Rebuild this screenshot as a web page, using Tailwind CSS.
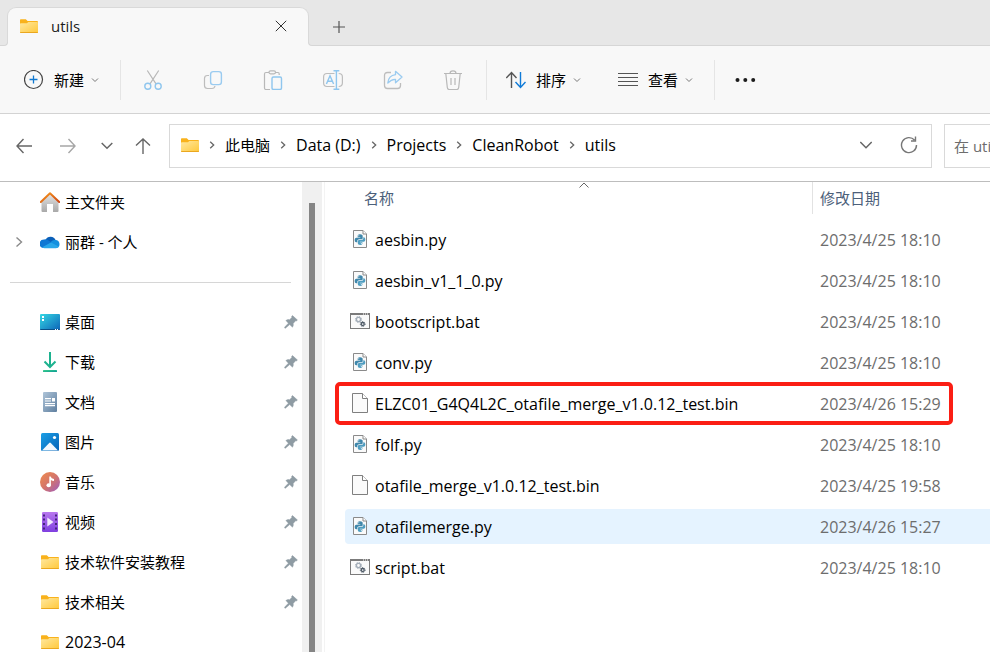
<!DOCTYPE html>
<html lang="zh-CN">
<head>
<meta charset="utf-8">
<meta name="viewport" content="width=device-width, initial-scale=1">
<title>utils</title>
<script src="https://cdn.jsdelivr.net/npm/@tailwindcss/browser@4"></script>
</head>
<body class="flex h-screen flex-col overflow-hidden bg-white font-['Open_Sans','Noto_Sans_CJK_SC',sans-serif] text-[15px] leading-5 text-black">

<!-- Shared icons -->
<svg class="absolute size-0" aria-hidden="true">
  <defs>
    <linearGradient id="g-folder" x1="0" y1="0" x2="1" y2="1"><stop offset="0" stop-color="#ffe8a0"/><stop offset="1" stop-color="#ffc83a"/></linearGradient>
    <linearGradient id="g-house" x1="0" y1="0" x2="0" y2="1"><stop offset="0" stop-color="#e4e4e4"/><stop offset="1" stop-color="#a9a9a9"/></linearGradient>
    <linearGradient id="g-roof" x1="0" y1="0" x2="1" y2="1"><stop offset="0" stop-color="#f79a1e"/><stop offset="1" stop-color="#cf4310"/></linearGradient>
    <linearGradient id="g-desk" x1="0" y1="0" x2="1" y2="1"><stop offset="0" stop-color="#35d8e4"/><stop offset="1" stop-color="#0d64b8"/></linearGradient>
    <linearGradient id="g-down" x1="0" y1="0" x2="1" y2="1"><stop offset="0" stop-color="#3fd08c"/><stop offset="1" stop-color="#089a96"/></linearGradient>
    <linearGradient id="g-doc" x1="0" y1="0" x2="1" y2="1"><stop offset="0" stop-color="#aec4d8"/><stop offset="1" stop-color="#5f7f9f"/></linearGradient>
    <linearGradient id="g-pic" x1="0" y1="0" x2="1" y2="1"><stop offset="0" stop-color="#1b9fe6"/><stop offset="1" stop-color="#0562b6"/></linearGradient>
    <linearGradient id="g-music" x1="0" y1="0" x2="1" y2="1"><stop offset="0" stop-color="#f08c4c"/><stop offset=".5" stop-color="#d4756b"/><stop offset="1" stop-color="#9c5bc0"/></linearGradient>
    <linearGradient id="g-video" x1="0" y1="0" x2="0" y2="1"><stop offset="0" stop-color="#b877ee"/><stop offset="1" stop-color="#7f3fe0"/></linearGradient>
  </defs>
  <symbol id="folder" viewBox="0 0 20 20">
    <path d="M1 4a.8.8 0 0 1 .8-.8h5L8.600 5H18a1 1 0 0 1 1 1v3H1z" fill="#f9b21c"/>
    <path d="M1 8q0-.8.8-.8H8L9.300 6H18.200q.8 0 .8.800V16q0 1-.8 1H1.800Q1 17 1 16z" fill="url(#g-folder)"/>
    <path d="M1 16q0 1 .8 1h16.400q.8 0 .8-1z" fill="#eaa71f"/>
  </symbol>
  <symbol id="home" viewBox="0 0 20 20">
    <path d="M1.500 9.500 10 1.800l8.500 7.700V19q0 1-1 1H13v-8H7v8H2.500q-1 0-1-1z" fill="url(#g-house)"/>
    <path d="M.8 10 10 1.300 19.200 10" fill="none" stroke="url(#g-roof)" stroke-width="2" stroke-linecap="round" stroke-linejoin="round"/>
  </symbol>
  <symbol id="cloud" viewBox="0 0 20 20">
    <path d="M5.500 8a5.600 5.600 0 0 1 10.200.3L10 12z" fill="#0a5fb8"/>
    <path d="M4 7.500a5 5 0 0 1 4.500 1L15 12.500 3 16a4.300 4.300 0 0 1 1-8.500z" fill="#0f78d4"/>
    <path d="M10.500 10.500a4.500 4.500 0 0 1 5.200-2.400 4 4 0 0 1 1.300 7.700z" fill="#1490df"/>
    <path d="M2.200 15.200 10 11q1-.7 2 0l7 3.800a4 4 0 0 1-3 1.400H4.500a4 4 0 0 1-2.300-1z" fill="#29a7ea"/>
  </symbol>
  <symbol id="desktop" viewBox="0 0 20 20">
    <rect y="2" width="20" height="16" rx="1" fill="url(#g-desk)"/>
    <path d="M0 17h20q0 1-1 1H1q-1 0-1-1z" fill="#0a4f87"/>
    <path d="M2 4h2v2H2zM2 7h2v2H2zM15 17h1v1h-1zM17 17h1v1h-1z" fill="#fff"/>
  </symbol>
  <symbol id="download" viewBox="0 0 20 20">
    <path d="M10 0v14.500M4.500 9.500 10 15l5.500-5.500" fill="none" stroke="#1db28f" stroke-width="2"/>
    <rect x="3" y="18" width="14" height="2" rx=".5" fill="url(#g-down)"/>
  </symbol>
  <symbol id="document" viewBox="0 0 20 20">
    <rect x="3" width="14" height="20" rx="1" fill="url(#g-doc)"/>
    <path d="M5 6h6v1.200H5zM5 8.400h6v1.200H5zM12 6h3v3.500h-3zM5 11h10v1.200H5zM5 13h10v1.200H5z" fill="#fff"/>
  </symbol>
  <symbol id="picture" viewBox="0 0 20 20">
    <rect x="1" y="1" width="18" height="18" rx="1.500" fill="url(#g-pic)"/>
    <path d="M2 18.500 9.200 11q.8-.8 1.600 0l7.200 7.500z" fill="#f2f8fd"/>
    <circle cx="14.500" cy="5.500" r="1.600" fill="#fff"/>
  </symbol>
  <symbol id="music" viewBox="0 0 20 20">
    <circle cx="10" cy="10" r="10" fill="url(#g-music)"/>
    <ellipse cx="8.700" cy="13.300" rx="2.200" ry="2" fill="#fff"/>
    <path d="M10.900 13.300h-1.600V4.500h1.400q.4 2 3.300 2.600v2q-2-.3-3.100-1.200z" fill="#fff"/>
  </symbol>
  <symbol id="video" viewBox="0 0 20 20">
    <rect x="2" width="16" height="20" rx="1.200" fill="url(#g-video)"/>
    <path d="M3 2.500h2v2H3zM3 6.500h2v2H3zM3 11h2v2H3zM3 15.500h2v2H3zM15 2.500h2v2h-2zM15 6.500h2v2h-2zM15 11h2v2h-2zM15 15.500h2v2h-2z" fill="#46257e"/>
    <path d="M7.300 5.500v9l6.200-4.500z" fill="#f2eafd"/>
  </symbol>
  <symbol id="pin" viewBox="0 0 14 14">
    <path d="M8.500.6 13.400 5l-1 .9-.8-.1-2.400 2.600q.5 2-.7 3.800L5.700 9.600 1.400 13.200.6 12.900l.2-.9L4.400 8.200 1.900 5.500Q3.700 4.100 5.600 4.700L8 2.300 7.600 1.400z" fill="#8e9ba3" stroke="#8e9ba3" stroke-width=".5"/>
  </symbol>
  <symbol id="py" viewBox="0 0 20 20">
    <path d="M3.500 1.500h9.500l3.500 3.500v13.500h-13z" fill="#fafafa" stroke="#8a8a8a"/>
    <path d="M13 1.500V5h3.500" fill="#fff" stroke="#8a8a8a"/>
    <path d="M10 5.300c-2.300 0-2.300 1-2.300 2v.9h2.600v.5H6.400c-1.300 0-1.700 1.100-1.700 2.200 0 1.300.5 2.300 1.600 2.300h1v-1.100c0-1 .8-1.800 1.800-1.800h2.300c.8 0 1.300-.6 1.300-1.400V7.200c0-1.200-.9-1.900-2.700-1.900z" fill="#3f87ab"/>
    <path d="M10.200 16c2.200 0 2.200-1 2.200-1.900v-.9H9.900v-.5h3.800c1.200 0 1.600-1.100 1.600-2.100 0-1.300-.5-2.300-1.500-2.300h-.5v1c0 1-.8 1.700-1.800 1.700H9.200c-.8 0-1.400.6-1.400 1.400v1.700c0 1.200.8 1.900 2.400 1.900z" fill="#4f9dc0"/>
    <circle cx="8.800" cy="6.700" r=".5" fill="#fff"/><circle cx="11.300" cy="14.500" r=".5" fill="#fff"/>
  </symbol>
  <symbol id="bat" viewBox="0 0 20 20">
    <rect x=".5" y="2.500" width="19" height="15" fill="#fafafa" stroke="#7b7b7b"/>
    <path d="M0 2h20v2H0z" fill="#7b7b7b"/>
    <path d="M13 2.500h1v1h-1zM15 2.500h1v1h-1zM17 2.500h1v1h-1z" fill="#fff"/>
    <circle cx="8.500" cy="8.500" r="2.100" fill="none" stroke="#a3adb8" stroke-width="1.400"/>
    <circle cx="8.500" cy="8.500" r="3.100" fill="none" stroke="#a3adb8" stroke-dasharray="1.200 1.230"/>
    <circle cx="12.700" cy="13" r="1.500" fill="none" stroke="#4d5966" stroke-width="1.300"/>
    <circle cx="12.700" cy="13" r="2.400" fill="none" stroke="#4d5966" stroke-dasharray="1 .88"/>
  </symbol>
  <symbol id="bin" viewBox="0 0 20 20">
    <path d="M2.500.5h10l5 5v14h-15z" fill="#fafafa" stroke="#7f7f7f"/>
    <path d="M12.500.5v5h5" fill="#fff" stroke="#7f7f7f"/>
  </symbol>
  <symbol id="chev-down" viewBox="0 0 8 8"><path d="m1 2.500 3 3 3-3" fill="none" stroke="#777"/></symbol>
  <symbol id="chev-right" viewBox="0 0 8 8"><path d="M2.200.7 5.700 4 2.200 7.300" fill="none" stroke="#666" stroke-width="1.300"/></symbol>
</svg>

<header class="flex h-[46px] shrink-0 items-end border-b border-[#d6d6d6] bg-[#e7e7e7] pl-[7px]">
  <div class="relative -mb-px flex h-[39px] w-[302px] items-center rounded-t-[9px] border border-b-0 border-[#d9d9d9] bg-[#f8f8f8] pr-[21px] pb-0.5 pl-[11px]">
    <span class="absolute bottom-0 -left-1 size-1 bg-[#f8f8f8]"><span class="block size-1 rounded-br-[4px] border-r border-b border-[#d6d6d6] bg-[#e7e7e7]"></span></span>
    <span class="absolute -right-1 bottom-0 size-1 bg-[#f8f8f8]"><span class="block size-1 rounded-bl-[4px] border-b border-l border-[#d6d6d6] bg-[#e7e7e7]"></span></span>
    <svg class="size-5" aria-hidden="true"><use href="#folder"/></svg>
    <span class="ml-3 flex-1 font-medium text-[#1b1b1b]">utils</span>
    <button type="button" aria-label="关闭标签页"><svg class="size-3" viewBox="0 0 12 12" fill="none" stroke="#333"><path d="m.8.800 10.400 10.400M11.200.800.800 11.200"/></svg></button>
  </div>
  <button type="button" class="mb-3 ml-6" aria-label="新建标签页"><svg class="size-3" viewBox="0 0 12 12" fill="none" stroke="#555" stroke-width="1.200"><path d="M6 0v12M0 6h12"/></svg></button>
</header>

<div class="flex h-[68px] shrink-0 items-center border-b border-[#d3d3d3] bg-[#f8f8f8] pl-6" role="toolbar" aria-label="命令栏">
  <button type="button" class="flex items-center">
    <svg class="size-5" viewBox="0 0 20 20" fill="none" aria-hidden="true"><circle cx="9.500" cy="9.500" r="9" stroke="#444" stroke-width="1.200"/><path d="M9.500 5.500v8M5.500 9.500h8" stroke="#0f78d0" stroke-width="1.300"/></svg>
    <span class="ml-[10px]">新建</span>
    <svg class="ml-[7px] size-2" aria-hidden="true"><use href="#chev-down"/></svg>
  </button>
  <span class="ml-[21px] h-10 w-px bg-[#e5e5e5]"></span>
  <div class="ml-[22px] flex gap-10">
    <button type="button" aria-label="剪切"><svg class="size-5" viewBox="0 0 20 20" fill="none" stroke-width="1.200"><path d="M4.300.500 13 13.800M15.700.500 7 13.800" stroke="#b8b8b8"/><g stroke="#8fc6ee" stroke-width="1.400"><circle cx="4.800" cy="16.300" r="3"/><circle cx="15.200" cy="16.300" r="3"/></g></svg></button>
    <button type="button" aria-label="复制"><svg class="size-5" viewBox="0 0 20 20" fill="none"><path d="M6 5.500H4.500q-3 0-3 3v7q0 3 3 3H9q2.500 0 3-2.500" stroke="#bdbdbd" stroke-width="1.200"/><rect x="7.600" y="1.600" width="10.800" height="13" rx="2.600" stroke="#9acbf0" stroke-width="1.400"/></svg></button>
    <button type="button" aria-label="粘贴"><svg class="size-5" viewBox="0 0 20 20" fill="none"><path d="M6 2.500H3q-1.500 0-1.500 1.500v14q0 1.500 1.500 1.500h4M12 2.500h3q1.200 0 1.200 1.500v1" stroke="#b8b8b8" stroke-width="1.200"/><rect x="6" y=".8" width="6.500" height="3" rx="1.500" stroke="#b8b8b8" stroke-width="1.200"/><rect x="9" y="7" width="9.500" height="12.400" rx="1.500" stroke="#8fc6ee" stroke-width="1.400"/></svg></button>
    <button type="button" aria-label="重命名"><svg class="size-5" viewBox="0 0 20 20" fill="none"><path d="M11.500 3.500H4q-3.400 0-3.400 3.400v6.200q0 3.400 3.400 3.400h7.500M15.700 3.500q3.700 0 3.700 3.400v6.200q0 3.400-3.700 3.400" stroke="#bdbdbd" stroke-width="1.200"/><path d="M10.500.7h5.800M10.500 19.300h5.800M13.400.7v18.600M3.400 14 7 5.800 10.600 14M4.600 11.300h4.800" stroke="#8fc6ee" stroke-width="1.400"/></svg></button>
    <button type="button" aria-label="共享"><svg class="size-5" viewBox="0 0 20 20" fill="none"><path d="M8 2.500H4.500q-3 0-3 3v10q0 3 3 3h10q3 0 3-3V13" stroke="#bdbdbd" stroke-width="1.300"/><path d="M12.500 1.300 19 7l-6.500 5.700V9.300Q8.500 9 4.800 13 5.500 5.500 12.500 4.700z" stroke="#9acbf0" stroke-width="1.300" stroke-linejoin="round"/></svg></button>
    <button type="button" aria-label="删除"><svg class="size-5" viewBox="0 0 20 20" fill="none" stroke="#b8b8b8" stroke-width="1.200"><path d="M1 3.500h18M7 3.500q0-2.700 3-2.700t3 2.700M2.800 3.500l1.500 14q.2 2 2 2h7.400q1.800 0 2-2l1.500-14M8 8v7M12 8v7"/></svg></button>
  </div>
  <span class="ml-[23px] h-10 w-px bg-[#e5e5e5]"></span>
  <button type="button" class="ml-[19px] flex items-center">
    <svg class="size-5" viewBox="0 0 20 20" fill="none" stroke-width="1.400" aria-hidden="true"><path d="M5.500 18V2.500M.300 8 5.500 2.500l5 5.500" stroke="#555"/><path d="M14.500 2v15.500M9.500 12l5 5.500 5-5.500" stroke="#0f7bd8"/></svg>
    <span class="ml-[10px]">排序</span>
    <svg class="ml-[7px] size-2" aria-hidden="true"><use href="#chev-down"/></svg>
  </button>
  <button type="button" class="ml-[37px] flex items-center">
    <svg class="size-5" viewBox="0 0 20 20" fill="#555" aria-hidden="true"><path d="M0 3h20v1H0zM0 7h20v1H0zM0 11h20v1H0zM0 15h20v1H0z"/></svg>
    <span class="ml-[10px]">查看</span>
    <svg class="ml-[7px] size-2" aria-hidden="true"><use href="#chev-down"/></svg>
  </button>
  <span class="ml-[21px] h-10 w-px bg-[#e5e5e5]"></span>
  <button type="button" class="ml-5" aria-label="查看更多"><svg class="h-5 w-[21px]" viewBox="0 0 21 20" fill="#1c1c1c"><circle cx="2.500" cy="10" r="2"/><circle cx="10.300" cy="10" r="2"/><circle cx="18.200" cy="10" r="2"/></svg></button>
</div>

<div class="flex h-[68px] shrink-0 items-center border-b border-[#bdbdbd] pt-px pb-1">
  <div class="flex w-[169px] shrink-0 items-center pl-4">
    <button type="button" aria-label="后退"><svg class="size-4" viewBox="0 0 16 16" fill="none" stroke="#666" stroke-width="1.400"><path d="M16 8H1M7.500 1 1 8l6.500 7"/></svg></button>
    <button type="button" class="ml-7" aria-label="前进"><svg class="size-4" viewBox="0 0 16 16" fill="none" stroke="#a6a6a6" stroke-width="1.400"><path d="M0 8h15M8.500 1 15 8l-6.500 7"/></svg></button>
    <button type="button" class="ml-[25px]" aria-label="最近位置"><svg class="h-4 w-3" viewBox="0 0 12 16" fill="none" stroke="#666" stroke-width="1.500"><path d="m.700 5 5.300 5.300L11.300 5"/></svg></button>
    <button type="button" class="ml-[22px]" aria-label="向上"><svg class="size-4" viewBox="0 0 16 16" fill="none" stroke="#666" stroke-width="1.400"><path d="M8 16V1M1 7.500 8 1l7 6.500"/></svg></button>
  </div>
  <nav class="flex h-11 min-w-0 flex-1 items-center border border-[#d9d9d9] pr-[13px] pb-0.5 pl-[10px]" aria-label="地址">
    <svg class="size-5 shrink-0" aria-hidden="true"><use href="#folder"/></svg>
    <ol class="ml-2 flex flex-1 items-center text-base leading-5 whitespace-nowrap">
      <li class="flex items-center text-[15px]"><svg class="mr-[9px] size-2" aria-hidden="true"><use href="#chev-right"/></svg><a href="#">此电脑</a></li>
      <li class="flex items-center"><svg class="mx-[9px] size-2" aria-hidden="true"><use href="#chev-right"/></svg><a href="#">Data (D:)</a></li>
      <li class="flex items-center"><svg class="mx-[9px] size-2" aria-hidden="true"><use href="#chev-right"/></svg><a href="#">Projects</a></li>
      <li class="flex items-center"><svg class="mx-[9px] size-2" aria-hidden="true"><use href="#chev-right"/></svg><a href="#">CleanRobot</a></li>
      <li class="flex items-center"><svg class="mx-[9px] size-2" aria-hidden="true"><use href="#chev-right"/></svg><a href="#">utils</a></li>
    </ol>
    <button type="button" aria-label="以前的位置"><svg class="h-4 w-3" viewBox="0 0 12 16" fill="none" stroke="#666" stroke-width="1.500"><path d="m.300 5 5.700 5.700L11.700 5"/></svg></button>
    <button type="button" class="ml-7" aria-label="刷新"><svg class="size-[18px]" viewBox="0 0 18 18" fill="none" stroke="#777" stroke-width="1.400"><path d="M14.500 4A7.500 7.500 0 1 0 16.500 9M15.500.500V5H11"/></svg></button>
  </nav>
  <input type="text" aria-label="搜索" placeholder="在 utils 中搜索" class="ml-3 h-11 w-[46px] shrink-0 border border-r-0 border-[#d9d9d9] bg-white pl-[9px] placeholder:text-[#6d6d6d]">
</div>

<div class="flex min-h-0 flex-1">
  <aside class="w-[302px] shrink-0 overflow-hidden">
    <nav aria-label="导航窗格">
      <a href="#" class="flex h-10 items-center pl-10"><svg class="size-5" aria-hidden="true"><use href="#home"/></svg><span class="ml-[5px]">主文件夹</span></a>
      <a href="#" class="flex h-10 items-center pl-[14px]"><svg class="size-[10px]" viewBox="0 0 10 10" fill="none" stroke="#8a8a8a" stroke-width="1.400" aria-hidden="true"><path d="m2.500.500 5 4.500-5 4.500"/></svg><svg class="ml-4 size-5" aria-hidden="true"><use href="#cloud"/></svg><span class="ml-[5px]">丽群 - 个人</span></a>
      <div class="flex h-10 items-center pr-[11px] pl-[10px]"><hr class="flex-1 border-[#d6d6d6]"></div>
      <a href="#" class="flex h-10 items-center pr-1 pl-10"><svg class="size-5" aria-hidden="true"><use href="#desktop"/></svg><span class="ml-[5px] flex-1">桌面</span><svg class="size-[14px]" aria-hidden="true"><use href="#pin"/></svg></a>
      <a href="#" class="flex h-10 items-center pr-1 pl-10"><svg class="size-5" aria-hidden="true"><use href="#download"/></svg><span class="ml-[5px] flex-1">下载</span><svg class="size-[14px]" aria-hidden="true"><use href="#pin"/></svg></a>
      <a href="#" class="flex h-10 items-center pr-1 pl-10"><svg class="size-5" aria-hidden="true"><use href="#document"/></svg><span class="ml-[5px] flex-1">文档</span><svg class="size-[14px]" aria-hidden="true"><use href="#pin"/></svg></a>
      <a href="#" class="flex h-10 items-center pr-1 pl-10"><svg class="size-5" aria-hidden="true"><use href="#picture"/></svg><span class="ml-[5px] flex-1">图片</span><svg class="size-[14px]" aria-hidden="true"><use href="#pin"/></svg></a>
      <a href="#" class="flex h-10 items-center pr-1 pl-10"><svg class="size-5" aria-hidden="true"><use href="#music"/></svg><span class="ml-[5px] flex-1">音乐</span><svg class="size-[14px]" aria-hidden="true"><use href="#pin"/></svg></a>
      <a href="#" class="flex h-10 items-center pr-1 pl-10"><svg class="size-5" aria-hidden="true"><use href="#video"/></svg><span class="ml-[5px] flex-1">视频</span><svg class="size-[14px]" aria-hidden="true"><use href="#pin"/></svg></a>
      <a href="#" class="flex h-10 items-center pr-1 pl-10"><svg class="size-5" aria-hidden="true"><use href="#folder"/></svg><span class="ml-[5px] flex-1">技术软件安装教程</span><svg class="size-[14px]" aria-hidden="true"><use href="#pin"/></svg></a>
      <a href="#" class="flex h-10 items-center pr-1 pl-10"><svg class="size-5" aria-hidden="true"><use href="#folder"/></svg><span class="ml-[5px] flex-1">技术相关</span><svg class="size-[14px]" aria-hidden="true"><use href="#pin"/></svg></a>
      <a href="#" class="flex h-10 items-center pr-1 pl-10"><svg class="size-5" aria-hidden="true"><use href="#folder"/></svg><span class="ml-[5px] flex-1 text-base leading-5">2023-04</span></a>
    </nav>
  </aside>
  <div class="flex w-5 shrink-0 justify-center bg-[#f0f0f0] pt-[21px]"><div class="w-[6px] bg-[#858585]"></div></div>
  <main class="relative ml-[2px] min-w-0 flex-1 overflow-hidden border-l border-[#f3f3f3] pl-5">
    <table class="w-full table-fixed border-collapse text-left">
      <colgroup><col class="w-[467px]"><col></colgroup>
      <thead>
        <tr class="h-[37px] align-top text-[#4c607a]">
          <th scope="col" aria-sort="ascending" class="relative p-0 font-normal">
            <svg class="absolute top-0 left-[234px] h-2 w-[10px]" viewBox="0 0 10 8" fill="none" stroke="#666" aria-hidden="true"><path d="m.500 5.500 4.500-4.500L9.500 5.500"/></svg>
            <div class="flex h-8 items-center pl-[19px]">名称</div>
          </th>
          <th scope="col" class="p-0 font-normal"><div class="flex h-8 items-center border-l border-[#e2e2e2] pl-[7px]">修改日期</div></th>
        </tr>
      </thead>
      <tbody class="text-base leading-5 whitespace-nowrap">
        <tr><td class="px-0 py-[3px]"><div class="flex h-[35px] items-center pl-[5px]"><svg class="mr-[5px] mb-0.5 size-5" aria-hidden="true"><use href="#py"/></svg>aesbin.py</div></td><td class="px-0 py-[3px]"><div class="flex h-[35px] items-center pl-2 text-[#6d6d6d]">2023/4/25 18:10</div></td></tr>
        <tr><td class="px-0 py-[3px]"><div class="flex h-[35px] items-center pl-[5px]"><svg class="mr-[5px] mb-0.5 size-5" aria-hidden="true"><use href="#py"/></svg>aesbin_v1_1_0.py</div></td><td class="px-0 py-[3px]"><div class="flex h-[35px] items-center pl-2 text-[#6d6d6d]">2023/4/25 18:10</div></td></tr>
        <tr><td class="px-0 py-[3px]"><div class="flex h-[35px] items-center pl-[5px]"><svg class="mr-[5px] mb-0.5 size-5" aria-hidden="true"><use href="#bat"/></svg>bootscript.bat</div></td><td class="px-0 py-[3px]"><div class="flex h-[35px] items-center pl-2 text-[#6d6d6d]">2023/4/25 18:10</div></td></tr>
        <tr><td class="px-0 py-[3px]"><div class="flex h-[35px] items-center pl-[5px]"><svg class="mr-[5px] mb-0.5 size-5" aria-hidden="true"><use href="#py"/></svg>conv.py</div></td><td class="px-0 py-[3px]"><div class="flex h-[35px] items-center pl-2 text-[#6d6d6d]">2023/4/25 18:10</div></td></tr>
        <tr class="relative"><td class="px-0 py-[3px]"><span class="pointer-events-none absolute -inset-y-px right-[37px] -left-[10px] rounded-[5px] border-4 border-[#fb1e14]"></span><div class="flex h-[35px] items-center pl-[5px]"><svg class="mr-[5px] mb-0.5 size-5" aria-hidden="true"><use href="#bin"/></svg>ELZC01_G4Q4L2C_otafile_merge_v1.0.12_test.bin</div></td><td class="px-0 py-[3px]"><div class="flex h-[35px] items-center pl-2 text-[#6d6d6d]">2023/4/26 15:29</div></td></tr>
        <tr><td class="px-0 py-[3px]"><div class="flex h-[35px] items-center pl-[5px]"><svg class="mr-[5px] mb-0.5 size-5" aria-hidden="true"><use href="#py"/></svg>folf.py</div></td><td class="px-0 py-[3px]"><div class="flex h-[35px] items-center pl-2 text-[#6d6d6d]">2023/4/25 18:10</div></td></tr>
        <tr><td class="px-0 py-[3px]"><div class="flex h-[35px] items-center pl-[5px]"><svg class="mr-[5px] mb-0.5 size-5" aria-hidden="true"><use href="#bin"/></svg>otafile_merge_v1.0.12_test.bin</div></td><td class="px-0 py-[3px]"><div class="flex h-[35px] items-center pl-2 text-[#6d6d6d]">2023/4/25 19:58</div></td></tr>
        <tr><td class="px-0 py-[3px]"><div class="flex h-[35px] items-center rounded-l-sm bg-[#e5f3ff] pl-[5px]"><svg class="mr-[5px] mb-0.5 size-5" aria-hidden="true"><use href="#py"/></svg>otafilemerge.py</div></td><td class="px-0 py-[3px]"><div class="flex h-[35px] items-center bg-[#e5f3ff] pl-2 text-[#6d6d6d]">2023/4/26 15:27</div></td></tr>
        <tr><td class="px-0 py-[3px]"><div class="flex h-[35px] items-center pl-[5px]"><svg class="mr-[5px] mb-0.5 size-5" aria-hidden="true"><use href="#bat"/></svg>script.bat</div></td><td class="px-0 py-[3px]"><div class="flex h-[35px] items-center pl-2 text-[#6d6d6d]">2023/4/25 18:10</div></td></tr>
      </tbody>
    </table>
  </main>
</div>
</body>
</html>
